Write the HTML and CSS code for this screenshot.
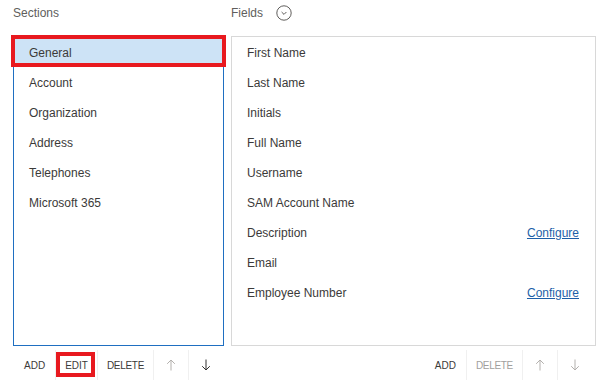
FILE: index.html
```html
<!DOCTYPE html>
<html lang="en">
<head>
    <meta charset="UTF-8">
    <meta name="viewport" content="width=device-width, initial-scale=1.0">
    <title>Sections and Fields</title>
    <link rel="stylesheet" href="styles.css">
</head>
<body>
    <div class="editor">
        <!-- Sections column -->
        <section class="column">
            <div class="column-head">Sections</div>
            <ul class="list list-sections">
                <li class="list-item is-selected">General</li>
                <li class="list-item">Account</li>
                <li class="list-item">Organization</li>
                <li class="list-item">Address</li>
                <li class="list-item">Telephones</li>
                <li class="list-item">Microsoft 365</li>
            </ul>
            <div class="command-bar">
                <button class="cmd">ADD</button>
                <span class="sep"></span>
                <button class="cmd is-marked">EDIT</button>
                <span class="sep"></span>
                <button class="cmd">DELETE</button>
                <span class="sep"></span>
                <button class="cmd cmd-icon is-disabled" aria-label="Move up">
                    <svg width="10" height="12" viewBox="0 0 10 12"><path d="M5 11.5V1M1.2 4.8L5 1l3.8 3.8"/></svg>
                </button>
                <span class="sep"></span>
                <button class="cmd cmd-icon" aria-label="Move down">
                    <svg width="10" height="12" viewBox="0 0 10 12"><path d="M5 0.5V11M1.2 7.2L5 11l3.8-3.8"/></svg>
                </button>
            </div>
        </section>

        <!-- Fields column -->
        <section class="column">
            <div class="column-head">
                Fields
                <svg class="head-toggle" width="16" height="16" viewBox="0 0 16 16">
                    <circle cx="8" cy="8" r="7.2"/>
                    <path d="M5.6 7l2.4 2.4L10.4 7"/>
                </svg>
            </div>
            <ul class="list list-fields">
                <li class="list-item">First Name</li>
                <li class="list-item">Last Name</li>
                <li class="list-item">Initials</li>
                <li class="list-item">Full Name</li>
                <li class="list-item">Username</li>
                <li class="list-item">SAM Account Name</li>
                <li class="list-item">Description <a href="#" class="item-link">Configure</a></li>
                <li class="list-item">Email</li>
                <li class="list-item">Employee Number <a href="#" class="item-link">Configure</a></li>
            </ul>
            <div class="command-bar command-bar-end">
                <button class="cmd">ADD</button>
                <span class="sep"></span>
                <button class="cmd is-disabled">DELETE</button>
                <span class="sep"></span>
                <button class="cmd cmd-icon is-disabled" aria-label="Move up">
                    <svg width="10" height="12" viewBox="0 0 10 12"><path d="M5 11.5V1M1.2 4.8L5 1l3.8 3.8"/></svg>
                </button>
                <span class="sep"></span>
                <button class="cmd cmd-icon is-disabled" aria-label="Move down">
                    <svg width="10" height="12" viewBox="0 0 10 12"><path d="M5 0.5V11M1.2 7.2L5 11l3.8-3.8"/></svg>
                </button>
            </div>
        </section>
    </div>
</body>
</html>
```

FILE: styles.css
```css
* {
    margin: 0;
    padding: 0;
    box-sizing: border-box;
}

body {
    font-family: 'Segoe UI', 'Liberation Sans', Arial, sans-serif;
    background-color: #FFFFFF;
    color: #3b3a39;
}

.editor {
    display: grid;
    grid-template-columns: 211px 365px;
    column-gap: 7px;
    padding: 0 10px 0 13px;
}

.column {
    display: flex;
    flex-direction: column;
}

.column-head {
    display: flex;
    align-items: center;
    gap: 13px;
    height: 24px;
    padding-top: 1px;
    margin-bottom: 12px;
    font-size: 12px;
    color: #605e5c;
}

.head-toggle {
    fill: none;
    stroke: #605e5c;
    stroke-width: 1;
}

.list {
    list-style: none;
    height: 310px;
    border: 1px solid #d8d8d8;
}

.list-sections {
    border-color: #1f6fc1;
}

.list-item {
    display: flex;
    align-items: center;
    justify-content: space-between;
    height: 30px;
    padding: 1px 16px 0 15px;
    font-size: 12px;
    position: relative;
}

.list-item.is-selected {
    background-color: #cde3f6;
}

/* red annotation frame */
.list-item.is-selected::after {
    content: "";
    position: absolute;
    left: -3px;
    right: -3px;
    top: -2px;
    bottom: 0;
    border: 4px solid #e8191f;
}

.item-link {
    color: #1d5fa8;
    text-decoration: underline;
}

.command-bar {
    display: flex;
    align-items: stretch;
    height: 30px;
    margin-top: 4px;
}

.command-bar > .cmd:first-child {
    padding: 0 10px 0 11px;
}

.command-bar-end {
    justify-content: flex-end;
    margin-right: 4px;
}

.command-bar-end > .cmd:first-child {
    padding: 0 10px;
}

.cmd {
    display: flex;
    align-items: center;
    justify-content: center;
    padding: 0 9px;
    border: none;
    background: none;
    font-family: inherit;
    font-size: 10px;
    color: #3b3a39;
    position: relative;
}

.cmd.is-disabled {
    color: #a19f9d;
}

.cmd-icon {
    width: 34px;
    padding: 0;
}

.cmd-icon svg {
    fill: none;
    stroke: #323130;
    stroke-width: 1;
}

.cmd-icon.is-disabled svg {
    stroke: #b3b0ad;
}

.cmd.is-marked::after {
    content: "";
    position: absolute;
    left: 0;
    right: 2px;
    top: 2px;
    bottom: 3px;
    border: 4px solid #e8191f;
}

.sep {
    width: 1px;
    background-color: #f0f0f0;
}

.sep + .cmd:not(.cmd-icon):not(.is-marked) {
    letter-spacing: -0.3px;
}
```
